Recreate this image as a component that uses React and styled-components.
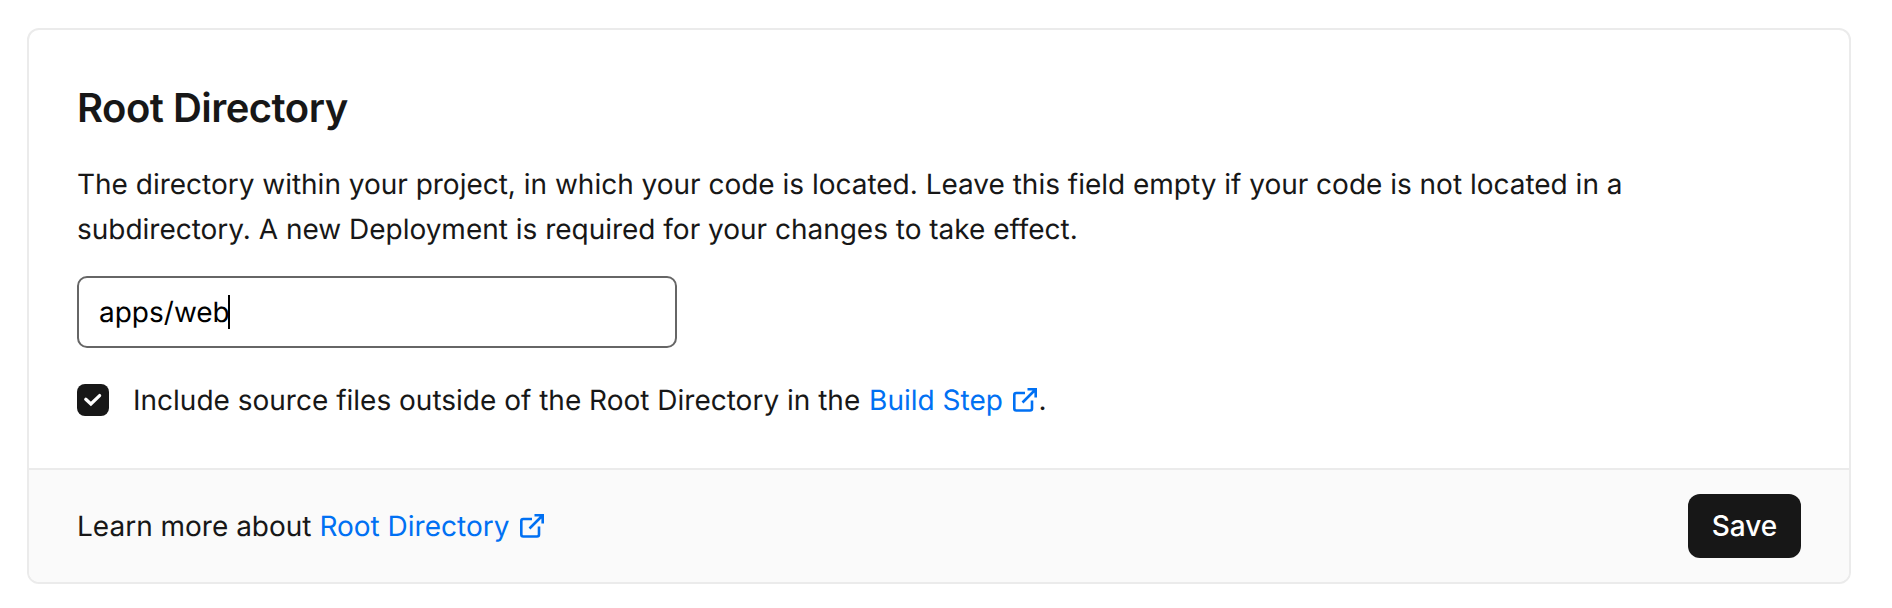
import React from "react";
import styled, { createGlobalStyle } from "styled-components";

const Global = createGlobalStyle`
  *, *::before, *::after { box-sizing: border-box; }
  body { margin: 0; background: #fff; color: #171717; font-family: Inter, sans-serif; font-size: 28px; -webkit-font-smoothing: antialiased; text-rendering: geometricPrecision; }
`;
const Page = styled.main`
  height: 608px;
  padding: 28px 41px 24px 27px;
`;
const Card = styled.section`
  display: flex;
  flex-direction: column;
  height: 556px;
  border: 2px solid #ebebeb;
  border-radius: 12px;
  overflow: hidden;
`;
const Body = styled.div`
  flex: 1;
  padding: 48px 48px 0;
`;
const Title = styled.h4`
  margin: 6px 0 30px;
  font-size: 40px;
  line-height: 48px;
  font-weight: 600;
  letter-spacing: -0.52px;
`;
const Description = styled.p`
  margin: 0;
  line-height: 45px;
  letter-spacing: -0.012px;
  width: 1600px;
`;
const Field = styled.div`
  display: flex;
  align-items: center;
  width: 600px;
  height: 72px;
  margin-top: 24px;
  padding: 0 20px;
  border: 2px solid #666;
  border-radius: 10px;
  color: #000;
`;
const Caret = styled.span`
  width: 2px;
  height: 34px;
  margin-left: -2px;
  background: #000;
`;
const CheckRow = styled.label`
  display: flex;
  align-items: center;
  gap: 24px;
  margin-top: 29px;
  line-height: 46px;
`;
const CheckBox = styled.span`
  display: grid;
  place-items: center;
  width: 32px;
  height: 32px;
  border-radius: 8px;
  background: #171717;
`;
const Link = styled.a`
  margin-left: ${(p) => p.$offset || 0}px;
  color: #0070f3;
`;
const LinkIcon = styled.svg`
  margin: 0 1px 0 10.5px;
  vertical-align: -2px;
`;
const Footer = styled.footer`
  display: flex;
  flex: none;
  align-items: center;
  justify-content: space-between;
  height: 114px;
  padding: 0 48px;
  border-top: 2px solid #ebebeb;
  background: #fafafa;
`;
const Save = styled.button`
  width: 113px;
  height: 64px;
  padding: 0;
  border: 0;
  border-radius: 12px;
  background: #171717;
  color: #fff;
  font: 500 28px Inter, sans-serif;
`;
const External = () => (
  <LinkIcon width="24" height="24" viewBox="0 0 24 24" fill="none" stroke="currentColor" strokeWidth="2.600">
    <path d="M12 5H3.300a2 2 0 0 0-2 2v13.500a2 2 0 0 0 2 2H17a2 2 0 0 0 2-2V12.500M14.500 1.300h8.200v8.200M22.500 1.500 9.500 14.500" />
  </LinkIcon>
);

export default function App() {
  return (
    <Page>
      <Global />
      <Card>
        <Body>
          <Title>Root Directory</Title>
          <Description>
            The directory within your project, in which your code is located. Leave this field empty if your code is not located in a subdirectory. A new Deployment is required for your changes to take effect.
          </Description>
          <Field>apps/web<Caret /></Field>
          <CheckRow>
            <CheckBox>
              <svg width="32" height="32" viewBox="0 0 32 32" fill="none" stroke="#fff" strokeWidth="3.300"><path d="M8.800 15.300l5.100 4.700 8.700-8.400" strokeLinecap="round" /></svg>
            </CheckBox>
            <span>Include source files outside of the Root Directory in the <Link $offset={1}>Build Step<External /></Link>.</span>
          </CheckRow>
        </Body>
        <Footer>
          <span>Learn more about <Link>Root Directory<External /></Link></span>
          <Save>Save</Save>
        </Footer>
      </Card>
    </Page>
  );
}
